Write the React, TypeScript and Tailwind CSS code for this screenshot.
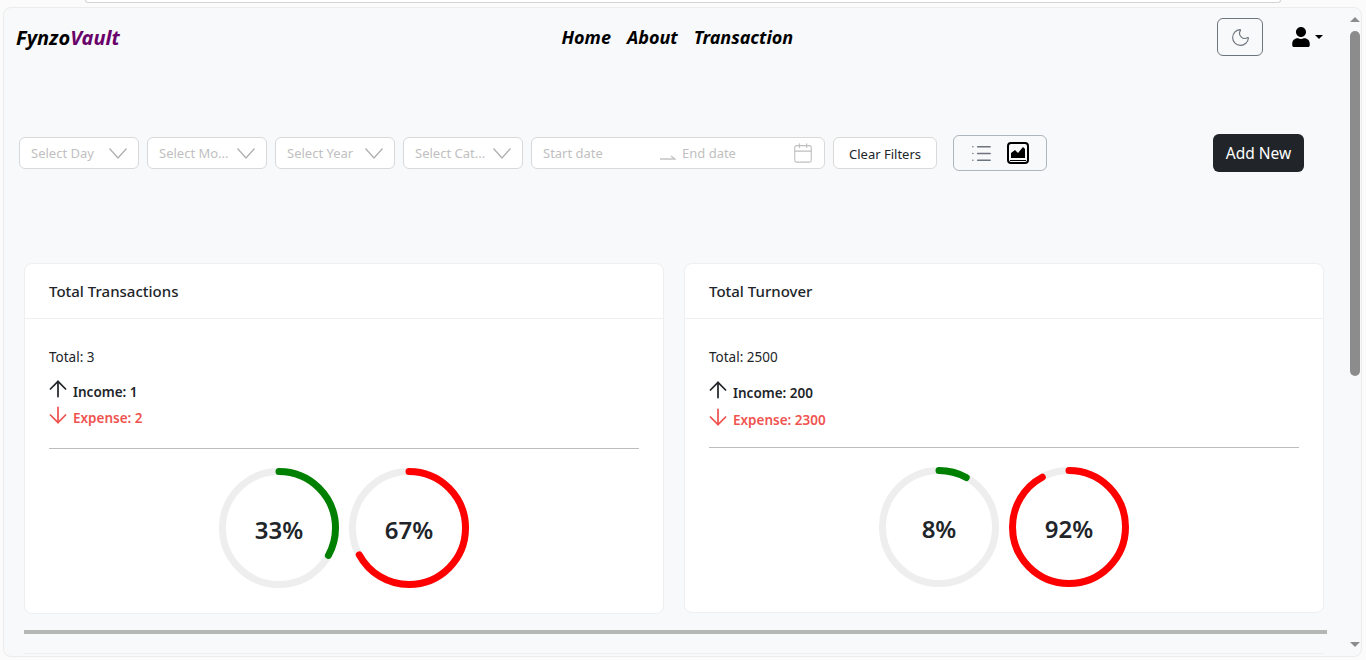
import { ArrowDown, ArrowUp, Calendar, List, Moon } from "lucide-react";
import { FaUser } from "react-icons/fa";

const font = "font-['Noto_Sans','Open_Sans',sans-serif]";

// Dropdown used by the filter row
const FilterSelect = ({ label }: { label: string }) => (
  <div className="flex h-8 w-[120px] items-center justify-between rounded-md border border-[#d9d9d9] bg-white pl-[11px] pr-[11px]">
    <span className="pt-[1px] text-[13px] whitespace-nowrap text-[#bfbfbf]">{label}</span>
    <svg viewBox="0 0 18 11" fill="none" className="h-[11px] w-[18px] shrink-0">
      <path d="M0.5 0.5L9 10L17.5 0.5" stroke="#b0b0b0" strokeWidth="1.3" />
    </svg>
  </div>
);

const Ring = ({ percent, color }: { percent: number; color: string }) => {
  const r = 56.5;
  const circumference = 2 * Math.PI * r;
  return (
    <div className="relative h-[120px] w-[120px]">
      <svg viewBox="0 0 120 120" className="h-[120px] w-[120px] -rotate-90">
        <circle cx="60" cy="60" r={r} fill="none" stroke="#eeeeee" strokeWidth="7" />
        <circle
          cx="60"
          cy="60"
          r={r}
          fill="none"
          stroke={color}
          strokeWidth="7"
          strokeLinecap="round"
          strokeDasharray={`${(circumference * percent) / 100} ${circumference}`}
        />
      </svg>
      <div className="absolute inset-0 flex items-center justify-center pt-[3px] text-[24px] font-semibold text-[#212529]">
        {percent}%
      </div>
    </div>
  );
};

type StatCardProps = {
  title: string;
  total: number;
  income: number;
  expense: number;
  incomePercent: number;
  expensePercent: number;
  tall?: boolean;
};

const StatCard = ({ title, total, income, expense, incomePercent, expensePercent, tall }: StatCardProps) => (
  <div className={`w-[640px] rounded-lg border border-[#eeeff1] bg-white ${tall ? "h-[350px]" : "h-[351px]"}`}>
    <div className="flex h-[55px] items-center border-b border-[#eeeff1] px-6 text-[15px] font-medium text-[#212529]">
      {title}
    </div>
    <div className="px-6 pt-[29px]">
      <p className="text-[13.5px] leading-[18px] text-[#212529]">Total: {total}</p>
      <div className={`flex items-center text-[13.5px] font-semibold text-[#212529] ${tall ? "mt-[14px] h-[27px]" : "mt-[13px] h-[26px]"}`}>
        <ArrowUp size={26} strokeWidth={1.6} className="-ml-[4px] mb-[7px] mr-[2px]" />
        Income: {income}
      </div>
      <div className={`flex items-center text-[13.5px] font-semibold text-[#ef5350] ${tall ? "h-[27px]" : "h-[26px]"}`}>
        <ArrowDown size={26} strokeWidth={1.6} className="-ml-[4px] mb-[7px] mr-[2px]" />
        Expense: {expense}
      </div>
      <div className={`border-t border-[#bdbdbd] ${tall ? "mt-[13px]" : "mt-[17px]"}`} />
      <div className="mt-[19px] flex justify-center gap-[10px]">
        <Ring percent={incomePercent} color="#008000" />
        <Ring percent={expensePercent} color="#ff0000" />
      </div>
    </div>
  </div>
);

const App = () => {
  return (
    <div className={`${font} flex h-[660px] flex-col overflow-hidden bg-[#fbfbfb] pb-[3px]`}>
      {/* Browser strip */}
      <div className="h-[7px] shrink-0 px-[85px]">
        <div className="h-[3px] rounded-b-xl border-x border-b border-[#d4d4d4] bg-white" />
      </div>

      <div className="ml-[3px] mr-[4px] flex min-h-0 flex-1 rounded-lg border border-[#ececec] bg-[#f8f9fa]">
        <main className="min-w-0 flex-1 overflow-hidden">
          {/* Navbar */}
          <nav className="flex h-[58px] items-center justify-between pl-[12px] pr-[12px]">
            <div className="mt-[1px] text-[20px] font-bold italic text-black">
              Fynzo<span className="text-[#6a006a]">Vault</span>
            </div>
            <div className="ml-[18px] flex gap-4 text-[18px] font-bold italic text-black">
              <span>Home</span>
              <span>About</span>
              <span>Transaction</span>
            </div>
            <div className="flex items-center gap-[28px]">
              <button className="flex h-[38px] w-[46px] items-center justify-center rounded-md border border-[#6c757d]">
                <Moon size={21} strokeWidth={1.3} className="text-[#6c757d]" />
              </button>
              <div className="flex items-center gap-1 text-black">
                <FaUser size={20} />
                <div className="h-0 w-0 border-x-[4px] border-t-[4px] border-x-transparent border-t-black" />
              </div>
            </div>
          </nav>

          {/* Filters */}
          <div className="mt-[68px] flex items-center pl-[15px]">
            <div className="flex items-center gap-2">
              <FilterSelect label="Select Day" />
              <FilterSelect label="Select Mo..." />
              <FilterSelect label="Select Year" />
              <FilterSelect label="Select Cat..." />
              <div className="flex h-8 w-[294px] items-center rounded-md border border-[#d9d9d9] bg-white pl-[11px] pr-[10px] text-[13px] text-[#bfbfbf]">
                <span className="w-[117px] pt-[1px]">Start date</span>
                <svg viewBox="0 0 16 6" fill="none" className="mt-[8px] h-[6px] w-[16px]">
                  <path d="M0 5H15L11 2" stroke="#c4c4c4" strokeWidth="1.4" />
                </svg>
                <span className="ml-[6px] flex-1 pt-[1px]">End date</span>
                <Calendar size={22} strokeWidth={1.2} className="text-[#bfbfbf]" />
              </div>
              <button className="h-8 w-[104px] rounded-md border border-[#d9d9d9] bg-white pt-[3px] text-[13px] text-[#212529]">
                Clear Filters
              </button>
            </div>
            <div className="ml-4 flex h-9 w-[94px] items-center justify-center gap-[13px] rounded-md border border-[#adb5bd]">
              <List size={23} strokeWidth={1.6} className="text-[#6c757d]" />
              <svg viewBox="0 0 24 24" className="h-[24px] w-[24px]">
                <rect x="2" y="2" width="20" height="20" rx="3" fill="none" stroke="#000" strokeWidth="2" />
                <path d="M5 17v-5l4-3 3 3 5-6 2 2v9z" fill="#000" />
                <path d="M4 19.5h16" stroke="#000" strokeWidth="1" />
              </svg>
            </div>
            <button className="ml-[166px] h-[38px] w-[91px] rounded-md bg-[#212529] pt-px text-[15.5px] text-white">
              Add New
            </button>
          </div>

          {/* Stat cards */}
          <div className="ml-[20px] mt-[91px] flex items-start gap-5">
            <StatCard title="Total Transactions" total={3} income={1} expense={2} incomePercent={33} expensePercent={67} />
            <StatCard title="Total Turnover" total={2500} income={200} expense={2300} incomePercent={8} expensePercent={92} tall />
          </div>
          <div className="ml-[20px] mt-[16px] h-1 w-[1303px] bg-[#b5b7b5]" />
          <div className="ml-[20px] mt-[19px] h-px w-[1300px] bg-[#eeeff1]" />
        </main>

        {/* Scrollbar */}
        <div className="flex w-[26px] shrink-0 flex-col items-end pr-px pt-[9px]">
          <div className="h-0 w-0 border-x-[5px] border-b-[5px] border-x-transparent border-b-[#8c8c8c]" />
          <div className="mt-[9px] h-[345px] w-[10px] rounded-full bg-[#8c8c8c]" />
          <div className="mb-[9px] mt-auto h-0 w-0 border-x-[5px] border-t-[5px] border-x-transparent border-t-[#8c8c8c]" />
        </div>
      </div>
    </div>
  );
};

export default App;
